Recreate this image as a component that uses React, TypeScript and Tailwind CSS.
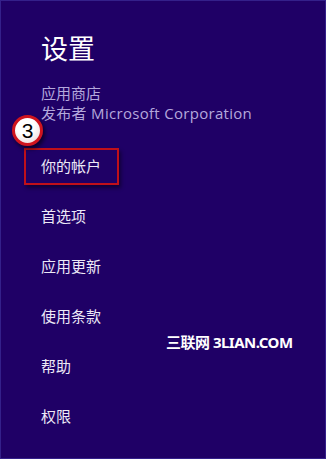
const items = ["首选项", "应用更新", "使用条款", "帮助", "权限"];

export default function App() {
  return (
    <div
      className="relative h-[459px] w-[326px] overflow-hidden border border-[#34208a] bg-[#1f0066] text-white"
      style={{ fontFamily: '"Open Sans", "Noto Sans CJK SC", sans-serif' }}
    >
      <div className="flex flex-col pl-[40px] pt-[32px]">
        <h1 className="text-[27px] leading-[32px] font-normal text-white">设置</h1>
        <div className="mt-[18px] text-[15px] leading-[20px] text-[#b4a8dc]">
          <p>应用商店</p>
          <p className="tracking-[0.3px]">发布者 Microsoft Corporation</p>
        </div>

        <ul className="mt-[18px] flex flex-col">
          <li className="relative -ml-[17px] flex h-[50px] items-center">
            <span className="flex h-[37px] w-[95px] items-center border-2 border-[#c0101a] pl-[15px] text-[15px] text-[#ece8f6] shadow-[2px_3px_4px_rgba(0,0,0,0.45)]">
              你的帐户
            </span>
          </li>
          {items.map((item) => (
            <li key={item} className="flex h-[50px] items-center text-[15px] text-[#ece8f6]">
              {item}
            </li>
          ))}
        </ul>
      </div>

      {/* step badge */}
      <div className="absolute left-[11px] top-[114px] flex h-[31px] w-[31px] items-center justify-center rounded-full border-[3px] border-[#d0141e] bg-[radial-gradient(circle_at_40%_30%,#ffffff_40%,#e8d0d0_100%)] shadow-[2px_3px_4px_rgba(0,0,0,0.6)]">
        <span className="text-[21px] leading-none text-black" style={{ fontFamily: '"Liberation Sans", sans-serif' }}>
          3
        </span>
      </div>

      {/* watermark */}
      <div
        className="absolute left-[165px] top-[330px] text-[15px] font-bold tracking-[-0.5px] text-white"
        style={{ fontFamily: '"Noto Sans", "Noto Sans CJK SC", sans-serif' }}
      >
        三联网 3LIAN.COM
      </div>
    </div>
  );
}
